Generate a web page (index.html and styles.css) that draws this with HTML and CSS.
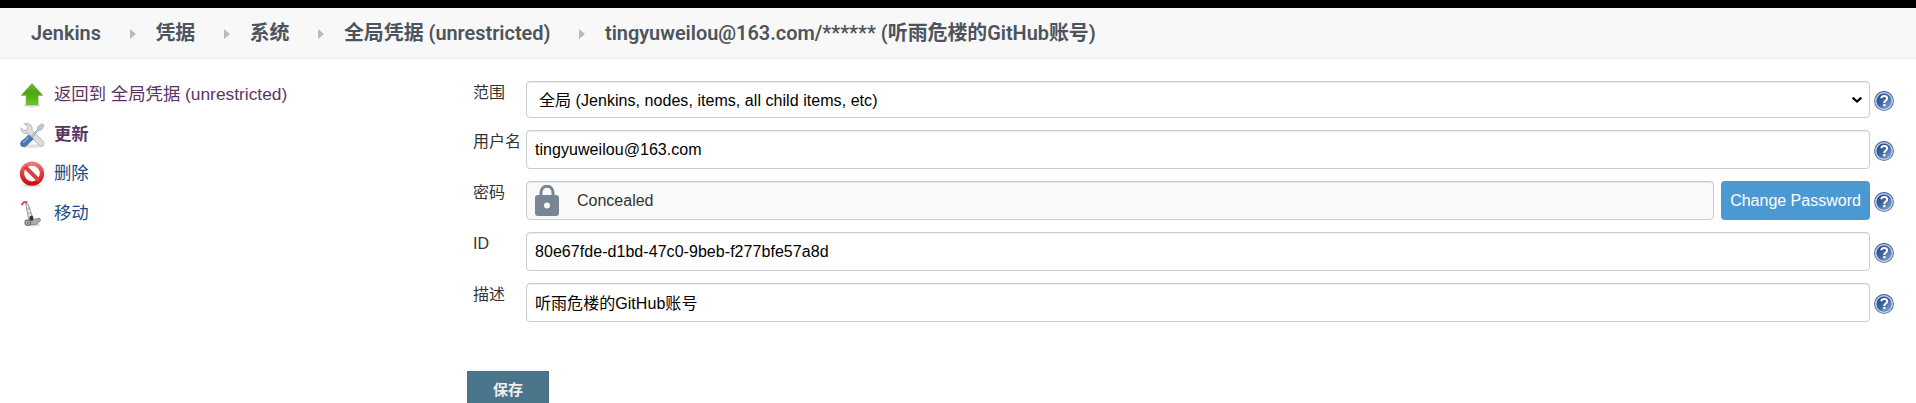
FILE: index.html
```html
<!DOCTYPE html>
<html lang="zh-CN">
<head>
<meta charset="utf-8">
<title>tingyuweilou@163.com/****** - Jenkins</title>
<link rel="stylesheet" href="styles.css">
</head>
<body>
<svg class="defs" width="0" height="0">
  <defs>
    <linearGradient id="helpRing" x1="0" y1="0" x2="0" y2="1"><stop offset="0" stop-color="#2f5793"/><stop offset="1" stop-color="#5f82b5"/></linearGradient>
    <linearGradient id="helpFill" x1="0" y1="0" x2="1" y2="1"><stop offset="0" stop-color="#1f478a"/><stop offset=".45" stop-color="#3b629f"/><stop offset="1" stop-color="#8eabd3"/></linearGradient>
    <linearGradient id="green" x1="0" y1="0" x2="0" y2="1"><stop offset="0" stop-color="#71b83a"/><stop offset=".45" stop-color="#4ca413"/><stop offset="1" stop-color="#62cf16"/></linearGradient>
    <linearGradient id="red" x1="0" y1="0" x2="0" y2="1"><stop offset="0" stop-color="#ea7777"/><stop offset=".5" stop-color="#dd3c3c"/><stop offset="1" stop-color="#cf1010"/></linearGradient>
    <symbol id="help" viewBox="0 0 20 20">
      <circle cx="10" cy="10" r="9.9" fill="url(#helpRing)"/>
      <circle cx="10" cy="10" r="8.2" fill="none" stroke="#c3d1e6" stroke-width="1.5"/>
      <circle cx="10" cy="10" r="7.3" fill="url(#helpFill)"/>
      <path d="M7.2 7.2Q7.6 5 10.1 5Q13.1 5 13.1 7.4Q13.1 8.7 11.5 9.8Q10.3 10.6 10.3 12" fill="none" stroke="#fff" stroke-width="2"/>
      <rect x="9.2" y="13" width="2.3" height="2.2" rx=".5" fill="#fff"/>
    </symbol>
  </defs>
</svg>
<div class="topbar"></div>
<nav class="crumbs">
  <a class="crumb">Jenkins</a><i class="sep"></i>
  <a class="crumb">凭据</a><i class="sep"></i>
  <a class="crumb">系统</a><i class="sep"></i>
  <a class="crumb">全局凭据 (unrestricted)</a><i class="sep"></i>
  <a class="crumb">tingyuweilou@163.com/****** (听雨危楼的GitHub账号)</a>
</nav>
<div class="page">
  <aside class="side">
    <a class="task visited">
      <svg width="26" height="26" viewBox="0 0 26 26"><ellipse cx="13" cy="23.3" rx="9" ry="1.6" fill="#000" opacity=".16"/><path d="M13 1.5L23.6 13.3H19V22.6H7.2V13.3H2.4Z" fill="url(#green)" stroke="#65a83a" stroke-width=".8" stroke-linejoin="round"/></svg>
      <span>返回到 全局凭据 (unrestricted)</span>
    </a>
    <a class="task visited current">
      <svg width="26" height="26" viewBox="0 0 26 26"><ellipse cx="13" cy="24" rx="12" ry="1.8" fill="#000" opacity=".12"/><path d="M5.4 1.7L8.8 5.2L7.8 8L4.7 8.5L2 5.7Q1.8 10.1 5.2 11.4Q7.2 12 9 11.2L20.2 23.4Q22.6 25 24.3 23.3Q25.8 21.6 24.5 19.8L13 8.2Q13.7 5.2 12 3.2Q9.5.7 5.4 1.7Z" fill="#dedfdd" stroke="#a9aba8" stroke-width=".8"/><path d="M10.7 15.7L18.3 7.8L18.8 4.8L23 1.6L25.1 3.5L22.3 7.9L19.5 8.6L12.2 16.8Z" fill="#bccbdd" stroke="#8a9fb9" stroke-width=".7"/><path d="M9.4 12.9L14.2 17.2Q10.8 19.3 8.2 23.1Q5.8 25.8 2.7 24.1Q.5 22.1 2.5 19.3Q7 16.3 9.4 12.9Z" fill="#4679ba" stroke="#2c5b99" stroke-width=".7"/><path d="M9.6 15.1Q7.1 18.6 3.8 20.6" fill="none" stroke="#88acd9" stroke-width="1.3"/></svg>
      <span>更新</span>
    </a>
    <a class="task">
      <svg width="26" height="26" viewBox="0 0 26 26"><ellipse cx="13" cy="24.4" rx="9.5" ry="1.4" fill="#000" opacity=".17"/><circle cx="13" cy="12.6" r="10" fill="#fff" stroke="url(#red)" stroke-width="4.4"/><path d="M6 5.7L20 19.6" stroke="#dc3e3e" stroke-width="4"/></svg>
      <span>删除</span>
    </a>
    <a class="task">
      <svg width="26" height="26" viewBox="0 0 26 26"><ellipse cx="14" cy="24" rx="7.5" ry="1.5" fill="#000" opacity=".13"/><path d="M6.7 2.1L9.5 17.9L12 22L14.3 18.1L9.1 3.2Z" fill="#e9eae8" stroke="#8d918c" stroke-width=".9"/><path d="M8.2 8.2L10.5 7.7M9 12.5L12 11.8" stroke="#999d98" stroke-width=".9"/><path d="M2.4 4.2L4.8 1.2L8.3 1" fill="none" stroke="#d95050" stroke-width="2"/><path d="M12.2 19.1L20.7 17.1L21.6 19.3L18.2 23.2L10.6 23.9Z" fill="#a8aca6" stroke="#737972" stroke-width=".7"/><ellipse cx="12.3" cy="17.2" rx="2" ry="2.6" fill="#30342f"/><circle cx="8.7" cy="21.8" r="2.7" fill="#babdb6" stroke="#686e68" stroke-width="1.1"/><circle cx="8.7" cy="21.8" r=".9" fill="#555"/></svg>
      <span>移动</span>
    </a>
  </aside>
  <main class="main">
    <div class="row short">
      <label>范围</label>
      <div class="select">
        <select class="field"><option>全局 (Jenkins, nodes, items, all child items, etc)</option></select>
        <svg class="chevron" width="12" height="8" viewBox="0 0 12 8"><path d="M1.6 1.6L6 5.6L10.4 1.6" fill="none" stroke="#000" stroke-width="2.1"/></svg>
      </div>
      <svg class="help"><use href="#help"/></svg>
    </div>
    <div class="row">
      <label>用户名</label>
      <input class="field" type="text" value="tingyuweilou@163.com">
      <svg class="help"><use href="#help"/></svg>
    </div>
    <div class="row">
      <label>密码</label>
      <div class="secret">
        <div class="field concealed">
          <svg width="24" height="31" viewBox="0 0 24 31"><path d="M6 12V7.2A6 6 0 0 1 18 7.2V12" fill="none" stroke="#788594" stroke-width="3"/><path fill-rule="evenodd" d="M3 10H21A3 3 0 0 1 24 13V28A3 3 0 0 1 21 31H3A3 3 0 0 1 0 28V13A3 3 0 0 1 3 10ZM12 17.5A3 3 0 1 0 12 23.5A3 3 0 1 0 12 17.5Z" fill="#788594"/></svg>
          <span>Concealed</span>
        </div>
        <button class="change" type="button">Change Password</button>
      </div>
      <svg class="help"><use href="#help"/></svg>
    </div>
    <div class="row">
      <label>ID</label>
      <input class="field" type="text" value="80e67fde-d1bd-47c0-9beb-f277bfe57a8d">
      <svg class="help"><use href="#help"/></svg>
    </div>
    <div class="row">
      <label>描述</label>
      <input class="field cjk" type="text" value="听雨危楼的GitHub账号">
      <svg class="help"><use href="#help"/></svg>
    </div>
    <button class="save" type="button">保存</button>
  </main>
</div>
</body>
</html>
```
FILE: styles.css
```css
* { box-sizing: border-box; }
html, body { height: 403px; overflow: hidden; }
body {
  margin: 0;
  background: #fff;
  color: #333;
  font: 16px/20px "Liberation Sans", "Noto Sans CJK SC", sans-serif;
}
.defs { display: block; height: 0; }
.topbar { height: 8px; background: #000; }
.crumbs {
  display: flex;
  align-items: center;
  height: 51px;
  padding: 1px 0 0 31px;
  background: #f8f8f8;
  border-bottom: 1px solid #ececec;
  white-space: nowrap;
}
.crumb { font: 600 19.9px/24px Roboto, "Noto Sans CJK SC", sans-serif; color: #4d545d; }
.sep {
  margin: 0 19.5px 0 29px;
  border: solid transparent;
  border-width: 5px 0 5px 6px;
  border-left-color: #bababa;
}
.page { display: flex; }
.side { flex: none; width: 467px; padding: 16px 0 0 18.5px; }
.task {
  display: flex;
  align-items: center;
  gap: 9.5px;
  height: 39.7px;
  font-size: 17.35px;
  line-height: 24px;
  color: #204a87;
}
.task span { padding-bottom: 2px; }
.visited { color: #5c3566; }
.current { font-weight: 700; }
.main { flex: 1; padding-top: 22px; }
.row {
  display: grid;
  grid-template-columns: 49px 1344px 20px;
  column-gap: 4px;
  height: 51px;
  padding-left: 6px;
}
.row label { padding-top: 2px; white-space: nowrap; }
.row.short { height: 49px; }
.field {
  width: 100%;
  height: 39px;
  padding: 0 8px;
  border: 1px solid #ccc;
  border-radius: 4px;
  background: #fff;
  box-shadow: inset 0 1px 1px rgba(0, 0, 0, .075);
  font: inherit;
  letter-spacing: .05px;
  color: #000;
}
.select { position: relative; }
.short .field { height: 37px; padding: 3px 30px 0 12px; appearance: none; }
.chevron { position: absolute; top: 15px; right: 7px; pointer-events: none; }
.cjk { padding-bottom: 2px; }
.help { width: 20px; height: 20px; margin-top: 11px; }
.short .help { margin-top: 10px; }
.secret { display: flex; gap: 7px; }
.concealed { display: flex; flex: 1; align-items: center; gap: 18px; background: #f9f9f9; color: #333; letter-spacing: 0; }
.change {
  width: 149px;
  height: 39px;
  padding: 0;
  border: 0;
  border-radius: 4px;
  background: #4b99d3;
  font: inherit;
  color: #fff;
}
.save {
  display: block;
  width: 82px;
  height: 39px;
  margin-top: 37px;
  padding: 0 0 2px;
  border: 1px solid #457085;
  background: #4b758b;
  font: inherit;
  font-size: 15px;
  font-weight: 700;
  color: #eee;
}
```
